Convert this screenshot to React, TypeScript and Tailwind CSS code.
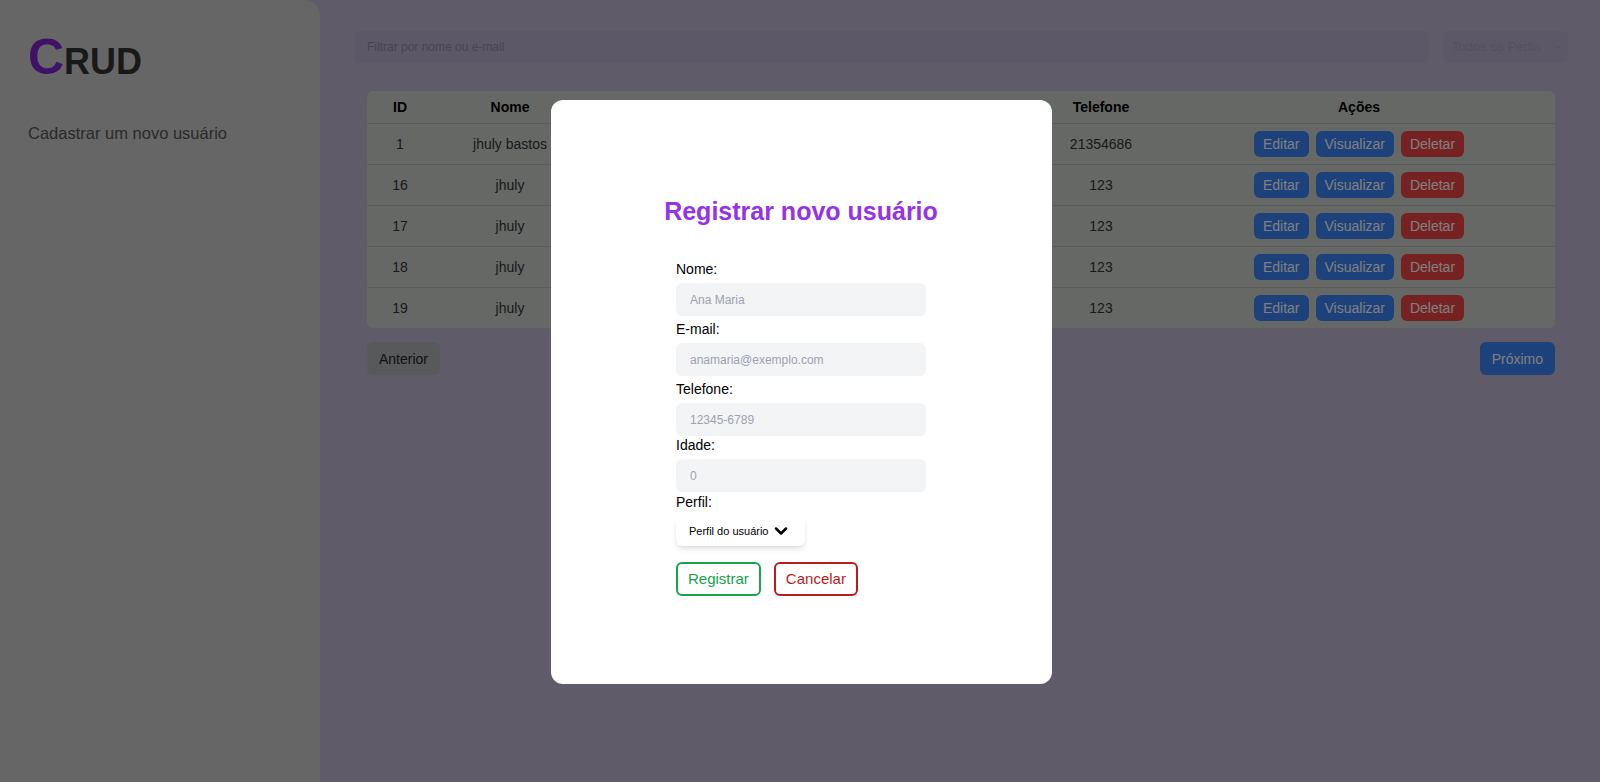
import { ChevronDown } from 'lucide-react'

interface User {
  id: number
  nome: string
  telefone: string
}

const users: User[] = [
  { id: 1, nome: 'jhuly bastos', telefone: '21354686' },
  { id: 16, nome: 'jhuly', telefone: '123' },
  { id: 17, nome: 'jhuly', telefone: '123' },
  { id: 18, nome: 'jhuly', telefone: '123' },
  { id: 19, nome: 'jhuly', telefone: '123' },
]

// spacing above each field follows the reference form
const fields = [
  { label: 'Nome:', placeholder: 'Ana Maria', spacing: '' },
  { label: 'E-mail:', placeholder: 'anamaria@exemplo.com', spacing: 'mt-[5px]' },
  { label: 'Telefone:', placeholder: '12345-6789', spacing: 'mt-[5px]' },
  { label: 'Idade:', placeholder: '0', spacing: 'mt-px' },
]

/**
 * Sidebar
 */
const Sidebar = () => (
  <aside className="w-[320px] shrink-0 h-full bg-[#cccccc] rounded-tr-2xl pl-[28px] pt-[32px]">
    <h1 className="text-4xl font-bold leading-none text-[#333333]">
      <span className="text-[50px] text-[#7e22ce]">C</span>RUD
    </h1>
    <p className="mt-[37px] text-[16.5px] leading-7 text-[#555555]">Cadastrar um novo usuário</p>
  </aside>
)

/**
 * UsersTable
 * E-mail, Idade and Perfil columns sit under the open modal
 */
const UsersTable = () => (
  <div className="mx-[13px] mt-[28px] rounded-md overflow-hidden bg-[#cdd1cd]">
    <table className="w-full table-fixed text-sm text-center text-[#333333]">
      <colgroup>
        <col className="w-[66px]" />
        <col className="w-[154px]" />
        <col className="w-[452px]" />
        <col className="w-[124px]" />
        <col />
      </colgroup>
      <thead>
        <tr className="border-b border-[#b4b6b4] text-black">
          <th className="py-1.5 font-bold">ID</th>
          <th className="py-1.5 font-bold">Nome</th>
          <th className="py-1.5"></th>
          <th className="py-1.5 font-bold">Telefone</th>
          <th className="py-1.5 font-bold">Ações</th>
        </tr>
      </thead>
      <tbody>
        {users.map((user, i) => (
          <tr
            key={user.id}
            className={i < users.length - 1 ? 'border-b border-[#b4b6b4]' : ''}
          >
            <td className="py-[7px]">{user.id}</td>
            <td className="py-[7px]">{user.nome}</td>
            <td className="py-[7px]"></td>
            <td className="py-[7px]">{user.telefone}</td>
            <td className="py-[7px]">
              <div className="flex justify-center gap-[7px]">
                <button className="h-[26px] px-[9px] rounded-md bg-[#3b82f6] text-white">Editar</button>
                <button className="h-[26px] px-[9px] rounded-md bg-[#3b82f6] text-white">Visualizar</button>
                <button className="h-[26px] px-[9px] rounded-md bg-[#ef4444] text-white">Deletar</button>
              </div>
            </td>
          </tr>
        ))}
      </tbody>
    </table>
  </div>
)

/**
 * RegisterModal
 */
const RegisterModal = () => (
  <div className="fixed inset-0 bg-black/50 flex items-center justify-center">
    <div className="w-[501px] h-[584px] ml-[2px] mt-[2px] bg-white rounded-xl pt-[95px]">
      <h2 className="text-[25px] leading-8 font-bold text-[#9333ea] text-center mb-[34px]">
        Registrar novo usuário
      </h2>

      <form className="w-[250px] mx-auto flex flex-col">
        {fields.map((field) => (
          <div key={field.label} className={`flex flex-col ${field.spacing}`}>
            <label className="text-sm leading-4 mb-[6px] text-black">{field.label}</label>
            <input
              placeholder={field.placeholder}
              className="h-[33px] w-full rounded-md bg-[#f3f4f6] pl-[14px] text-xs text-black placeholder:text-[#9ca3af] outline-none"
            />
          </div>
        ))}

        <div className="flex flex-col mt-[2px]">
          <label className="text-sm leading-4 mb-[6px] text-black">Perfil:</label>
          <button
            type="button"
            className="self-start h-[30px] flex items-center gap-0.5 pl-[13px] pr-[14px] rounded-md bg-white shadow-md text-[11px] text-black"
          >
            Perfil do usuário
            <ChevronDown size={20} strokeWidth={3} />
          </button>
        </div>

        {/* Actions */}
        <div className="flex gap-[13px] mt-4">
          <button
            type="button"
            className="h-[34px] px-[10px] rounded-md border-2 border-[#16a34a] text-[15px] text-[#16a34a]"
          >
            Registrar
          </button>
          <button
            type="button"
            className="h-[34px] px-[10px] rounded-md border-2 border-[#b91c1c] text-[15px] text-[#b91c1c]"
          >
            Cancelar
          </button>
        </div>
      </form>
    </div>
  </div>
)

export default function App() {
  return (
    <div className="relative flex h-screen overflow-hidden bg-[#beb6d2] font-['Liberation_Sans',Arial,sans-serif]">
      <Sidebar />

      <main className="flex-1 pl-[34px] pr-8 pt-[31px]">
        {/* Filters */}
        <div className="flex gap-[14px]">
          <input
            placeholder="Filtrar por nome ou e-mail"
            className="flex-1 h-8 rounded-md bg-[#b8b0d0] pl-[13px] text-xs placeholder:text-[#8e88a2] outline-none"
          />
          <div className="w-[125px] h-8 rounded-md bg-[#b8b0d0] flex items-center justify-between pl-[9px] pr-[4px] text-[13px] text-[#a9a3bc]">
            Todos os Perfis
            <ChevronDown size={12} strokeWidth={2} />
          </div>
        </div>

        <UsersTable />

        {/* Pagination */}
        <div className="mx-[13px] mt-3.5 flex justify-between">
          <button className="h-[33px] px-3 rounded-md bg-[#b0b2b6] text-sm text-[#222222]">Anterior</button>
          <button className="h-[33px] px-3 rounded-md bg-[#3b82f6] text-sm text-white">Próximo</button>
        </div>
      </main>

      <RegisterModal />
    </div>
  )
}
